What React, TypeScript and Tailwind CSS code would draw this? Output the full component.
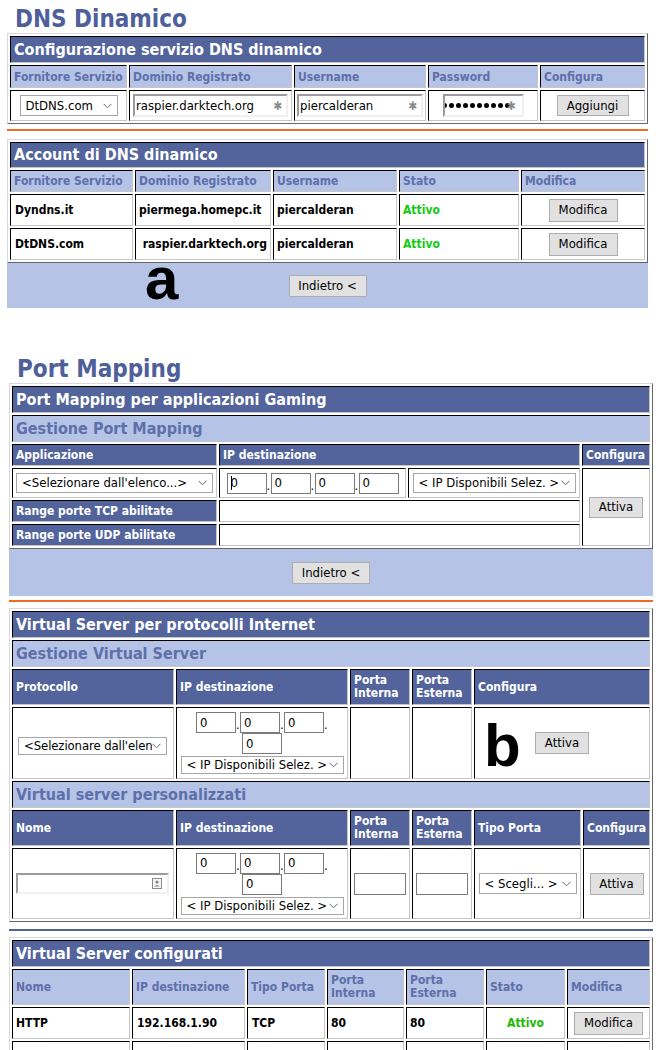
import React from "react";

const cellB =
  "border border-t-black border-l-black border-r-[#c6c6c6] border-b-[#c6c6c6]";
const dark = `${cellB} bg-[#53649d] text-white font-bold`;
const light = `${cellB} bg-[#b4c3e6] text-[#5e6fa9] font-bold`;
const white = `${cellB} bg-white`;
const outer =
  "border border-t-[#d8d8de] border-l-[#d8d8de] border-r-[#666666] border-b-[#666666] bg-white p-[2px]";

function Chevron() {
  return (
    <svg width="9" height="6" viewBox="0 0 9 6" className="shrink-0">
      <path d="M0.5 0.8 L4.5 4.8 L8.5 0.8" stroke="#666" strokeWidth="1" fill="none" />
    </svg>
  );
}

function Sel({ text, className }: { text: string; className: string }) {
  return (
    <div
      className={`flex items-center bg-white border border-[#a6a6a6] text-[13px] text-black pl-[5px] pr-[5px] ${className}`}
    >
      <span className="flex-1 whitespace-nowrap overflow-hidden">{text}</span>
      <Chevron />
    </div>
  );
}

function Btn({ children, className }: { children: React.ReactNode; className: string }) {
  return (
    <div
      className={`flex items-center justify-center bg-[#e1e1e1] border border-[#adadad] text-[13px] text-black ${className}`}
    >
      {children}
    </div>
  );
}

function Box({ caret }: { caret?: boolean }) {
  return (
    <div className="w-[40px] h-[21px] border border-[#7a7a7a] bg-white text-[13px] pl-[3px] flex items-center">
      {caret && <span className="w-[1px] h-[14px] bg-black mr-[-1px]" />}
      0
    </div>
  );
}

function Dot() {
  return <span className="w-[4px] text-[13px] leading-[17px] text-black">.</span>;
}

function Field({ text, className, star }: { text: React.ReactNode; className: string; star?: boolean }) {
  return (
    <div
      className={`flex items-center bg-white border-2 border-t-[#9c9c9c] border-l-[#9c9c9c] border-r-[#f0f0f0] border-b-[#f0f0f0] text-[13px] text-black pl-[1px] ${className}`}
    >
      <span className="whitespace-nowrap flex items-center">{text}</span>
      {star && <span className="ml-auto mr-[4px] text-[#8a8a8a] text-[12px] leading-none">✱</span>}
    </div>
  );
}

function IpStack() {
  return (
    <div className="flex flex-col items-center">
      <div className="flex items-end">
        <Box />
        <Dot />
        <Box />
        <Dot />
        <Box />
        <Dot />
      </div>
      <Box />
      <Sel text="< IP Disponibili Selez. >" className="w-[163px] h-[18px] mt-[2px]" />
    </div>
  );
}

function Input({ className }: { className: string }) {
  return <div className={`bg-white border border-[#7a7a7a] ${className}`} />;
}

function PortaHead({ cls, second }: { cls: string; second: string }) {
  return (
    <div className={`${cls} flex items-center pl-[3px] text-[12px] leading-[13px]`}>
      Porta
      <br />
      {second}
    </div>
  );
}

export default function App() {
  return (
    <div className="w-[662px] h-[1050px] overflow-hidden bg-white text-black font-['DejaVu_Sans_Condensed','DejaVu_Sans',sans-serif]">
      {/* DNS Dinamico */}
      <h1 className="mt-[5px] ml-[15px] h-[28px] leading-[28px] text-[24px] font-bold text-[#4e5f9b]">
        DNS Dinamico
      </h1>
      <div className={`ml-[7px] w-[641px] ${outer}`}>
        <div className="grid grid-cols-[117px_163px_132px_110px_105px] grid-rows-[27px_23px_31px] gap-[2px]">
          <div className={`${dark} col-span-5 flex items-center pl-[3px] text-[16px]`}>
            Configurazione servizio DNS dinamico
          </div>
          {["Fornitore Servizio", "Dominio Registrato", "Username", "Password", "Configura"].map((h) => (
            <div key={h} className={`${light} flex items-center pl-[3px] text-[12px]`}>
              {h}
            </div>
          ))}
          <div className={`${white} flex items-center justify-center`}>
            <Sel text="DtDNS.com" className="w-[98px] h-[21px]" />
          </div>
          <div className={`${white} flex items-center justify-center`}>
            <Field text="raspier.darktech.org" star className="w-[155px] h-[23px]" />
          </div>
          <div className={`${white} flex items-center justify-center`}>
            <Field text="piercalderan" star className="w-[126px] h-[23px]" />
          </div>
          <div className={`${white} flex items-center justify-center`}>
            <div className="relative w-[81px] h-[23px] overflow-hidden flex items-center bg-white border-2 border-t-[#9c9c9c] border-l-[#9c9c9c] border-r-[#f0f0f0] border-b-[#f0f0f0]">
              <span className="flex items-center gap-[2px] ml-[-3px]">
                {Array.from({ length: 10 }).map((_, i) => (
                  <span key={i} className="w-[5px] h-[5px] rounded-full bg-black shrink-0" />
                ))}
              </span>
              <span className="absolute right-[6px] top-[4px] text-[#8a8a8a] text-[12px] leading-none">✱</span>
            </div>
          </div>
          <div className={`${white} flex items-center justify-center`}>
            <Btn className="w-[72px] h-[21px]">Aggiungi</Btn>
          </div>
        </div>
      </div>

      <div className="ml-[7px] w-[641px] h-[2px] mt-[5px] bg-[#f26a1f]" />

      <div className={`ml-[7px] w-[641px] mt-[8px] ${outer}`}>
        <div className="grid grid-cols-[123px_136px_124px_120px_124px] grid-rows-[26px_22px_32px_32px] gap-[2px]">
          <div className={`${dark} col-span-5 flex items-center pl-[3px] text-[16px]`}>
            Account di DNS dinamico
          </div>
          {["Fornitore Servizio", "Dominio Registrato", "Username", "Stato", "Modifica"].map((h) => (
            <div key={h} className={`${light} flex items-center pl-[3px] text-[12px]`}>
              {h}
            </div>
          ))}
          {[
            ["Dyndns.it", "piermega.homepc.it"],
            ["DtDNS.com", "\u00a0raspier.darktech.org"],
          ].map(([p, d]) => (
            <React.Fragment key={p}>
              <div className={`${white} flex items-center pl-[4px] text-[12px] font-bold`}>{p}</div>
              <div className={`${white} flex items-center pl-[3px] text-[12px] font-bold whitespace-nowrap`}>{d}</div>
              <div className={`${white} flex items-center pl-[3px] text-[12px] font-bold`}>piercalderan</div>
              <div className={`${white} flex items-center pl-[3px] text-[12px] font-bold text-[#11cc11]`}>Attivo</div>
              <div className={`${white} flex items-center justify-center`}>
                <Btn className="w-[69px] h-[23px]">Modifica</Btn>
              </div>
            </React.Fragment>
          ))}
        </div>
      </div>
      <div className="relative ml-[7px] w-[641px] h-[45px] bg-[#b4c3e6] flex items-center justify-center">
        <span className="absolute left-[138px] top-[-4px] text-[60px] leading-[40px] font-bold font-['Liberation_Sans',sans-serif] text-black">
          a
        </span>
        <Btn className="w-[78px] h-[22px]">Indietro &lt;</Btn>
      </div>

      {/* Port Mapping */}
      <h1 className="mt-[47px] ml-[17px] h-[28px] leading-[28px] text-[24px] font-bold text-[#4e5f9b]">
        Port Mapping
      </h1>
      <div className={`ml-[9px] w-[644px] ${outer}`}>
        <div className="grid grid-cols-[205px_187px_172px_68px] grid-rows-[27px_27px_22px_30px_22px_22px] gap-[2px]">
          <div className={`${dark} col-span-4 flex items-center pl-[3px] text-[16px]`}>
            Port Mapping per applicazioni Gaming
          </div>
          <div className={`${light} col-span-4 flex items-center pl-[3px] text-[16px]`}>
            Gestione Port Mapping
          </div>
          <div className={`${dark} flex items-center pl-[3px] text-[12px]`}>Applicazione</div>
          <div className={`${dark} col-span-2 flex items-center pl-[3px] text-[12px]`}>IP destinazione</div>
          <div className={`${dark} flex items-center pl-[3px] text-[12px]`}>Configura</div>
          <div className={`${white} flex items-center pl-[3px]`}>
            <Sel text="<Selezionare dall'elenco...>" className="w-[197px] h-[20px]" />
          </div>
          <div className={`${white} flex items-center justify-center`}>
            <div className="flex items-end">
              <Box caret />
              <Dot />
              <Box />
              <Dot />
              <Box />
              <Dot />
              <Box />
            </div>
          </div>
          <div className={`${white} flex items-center justify-center`}>
            <Sel text="< IP Disponibili Selez. >" className="w-[163px] h-[20px]" />
          </div>
          <div className={`${white} row-span-3 flex items-center justify-center`}>
            <Btn className="w-[54px] h-[21px]">Attiva</Btn>
          </div>
          <div className={`${dark} flex items-center pl-[3px] text-[12px]`}>Range porte TCP abilitate</div>
          <div className={`${white} col-span-2`} />
          <div className={`${dark} flex items-center pl-[3px] text-[12px]`}>Range porte UDP abilitate</div>
          <div className={`${white} col-span-2`} />
        </div>
      </div>
      <div className="ml-[9px] w-[644px] h-[47px] bg-[#b4c3e6] flex items-center justify-center">
        <Btn className="w-[78px] h-[22px]">Indietro &lt;</Btn>
      </div>

      <div className="ml-[9px] w-[644px] h-[2px] mt-[4px] bg-[#f26a1f]" />

      {/* Virtual Server */}
      <div className={`ml-[9px] w-[644px] mt-[6px] ${outer}`}>
        <div className="grid grid-cols-[162px_172px_60px_60px_107px_67px] grid-rows-[27px_27px_36px_72px_27px_36px_71px] gap-[2px]">
          <div className={`${dark} col-span-6 flex items-center pl-[3px] text-[16px]`}>
            Virtual Server per protocolli Internet
          </div>
          <div className={`${light} col-span-6 flex items-center pl-[3px] text-[16px]`}>
            Gestione Virtual Server
          </div>
          <div className={`${dark} flex items-center pl-[3px] text-[12px]`}>Protocollo</div>
          <div className={`${dark} flex items-center pl-[3px] text-[12px]`}>IP destinazione</div>
          <PortaHead cls={dark} second="Interna" />
          <PortaHead cls={dark} second="Esterna" />
          <div className={`${dark} col-span-2 flex items-center pl-[3px] text-[12px]`}>Configura</div>

          <div className={`${white} flex items-center pl-[5px]`}>
            <Sel text="<Selezionare dall'elen" className="w-[149px] h-[18px] mt-[5px] text-[12.5px] tracking-[-0.1px]" />
          </div>
          <div className={`${white} flex items-center justify-center`}>
            <IpStack />
          </div>
          <div className={white} />
          <div className={white} />
          <div className={`${white} col-span-2 relative flex items-center justify-center`}>
            <span className="absolute left-[9px] top-[8px] text-[60px] leading-[60px] font-bold font-['Liberation_Sans',sans-serif] text-black">
              b
            </span>
            <Btn className="w-[54px] h-[22px] text-[12px]">Attiva</Btn>
          </div>

          <div className={`${light} col-span-6 flex items-center pl-[3px] text-[16px]`}>
            Virtual server personalizzati
          </div>
          <div className={`${dark} flex items-center pl-[3px] text-[12px]`}>Nome</div>
          <div className={`${dark} flex items-center pl-[3px] text-[12px]`}>IP destinazione</div>
          <PortaHead cls={dark} second="Interna" />
          <PortaHead cls={dark} second="Esterna" />
          <div className={`${dark} flex items-center pl-[3px] text-[12px]`}>Tipo Porta</div>
          <div className={`${dark} flex items-center pl-[3px] text-[12px]`}>Configura</div>

          <div className={`${white} flex items-center pl-[3px]`}>
            <div className="w-[153px] h-[21px] bg-white border-2 border-t-[#9c9c9c] border-l-[#9c9c9c] border-r-[#f0f0f0] border-b-[#f0f0f0] flex items-center">
              <svg width="10" height="11" viewBox="0 0 10 11" className="ml-auto mr-[5px]">
                <rect x="0.5" y="0.5" width="9" height="10" fill="#f4f4f4" stroke="#8a8a8a" />
                <circle cx="5" cy="4" r="1.6" fill="#8a8a8a" />
                <path d="M2.3 8.6 Q5 5.4 7.7 8.6 Z" fill="#8a8a8a" />
              </svg>
            </div>
          </div>
          <div className={`${white} flex items-center justify-center`}>
            <IpStack />
          </div>
          <div className={`${white} flex items-center justify-center`}>
            <Input className="w-[52px] h-[22px]" />
          </div>
          <div className={`${white} flex items-center justify-center`}>
            <Input className="w-[52px] h-[22px]" />
          </div>
          <div className={`${white} flex items-center justify-center`}>
            <Sel text="< Scegli... >" className="w-[98px] h-[21px]" />
          </div>
          <div className={`${white} flex items-center justify-center`}>
            <Btn className="w-[54px] h-[22px]">Attiva</Btn>
          </div>
        </div>
      </div>

      <div className="ml-[9px] w-[644px] h-[2px] mt-[7px] bg-[#53649d]" />

      <div className={`ml-[9px] w-[644px] mt-[6px] ${outer}`}>
        <div className="grid grid-cols-[118px_113px_78px_77px_78px_79px_83px] grid-rows-[27px_36px_32px_32px] gap-[2px]">
          <div className={`${dark} col-span-7 flex items-center pl-[3px] text-[16px]`}>
            Virtual Server configurati
          </div>
          <div className={`${light} flex items-center pl-[3px] text-[12px]`}>Nome</div>
          <div className={`${light} flex items-center pl-[3px] text-[12px]`}>IP destinazione</div>
          <div className={`${light} flex items-center pl-[3px] text-[12px]`}>Tipo Porta</div>
          <PortaHead cls={light} second="Interna" />
          <PortaHead cls={light} second="Esterna" />
          <div className={`${light} flex items-center pl-[3px] text-[12px]`}>Stato</div>
          <div className={`${light} flex items-center pl-[3px] text-[12px]`}>Modifica</div>

          <div className={`${white} flex items-center pl-[3px] text-[12px] font-bold`}>HTTP</div>
          <div className={`${white} flex items-center pl-[4px] text-[12px] font-bold`}>192.168.1.90</div>
          <div className={`${white} flex items-center pl-[4px] text-[12px] font-bold`}>TCP</div>
          <div className={`${white} flex items-center pl-[3px] text-[12px] font-bold`}>80</div>
          <div className={`${white} flex items-center pl-[3px] text-[12px] font-bold`}>80</div>
          <div className={`${white} flex items-center justify-center text-[12px] font-bold text-[#22bb00]`}>Attivo</div>
          <div className={`${white} flex items-center justify-center`}>
            <Btn className="w-[69px] h-[23px]">Modifica</Btn>
          </div>

          <div className={white} />
          <div className={white} />
          <div className={white} />
          <div className={white} />
          <div className={white} />
          <div className={white} />
          <div className={white} />
        </div>
      </div>
    </div>
  );
}
